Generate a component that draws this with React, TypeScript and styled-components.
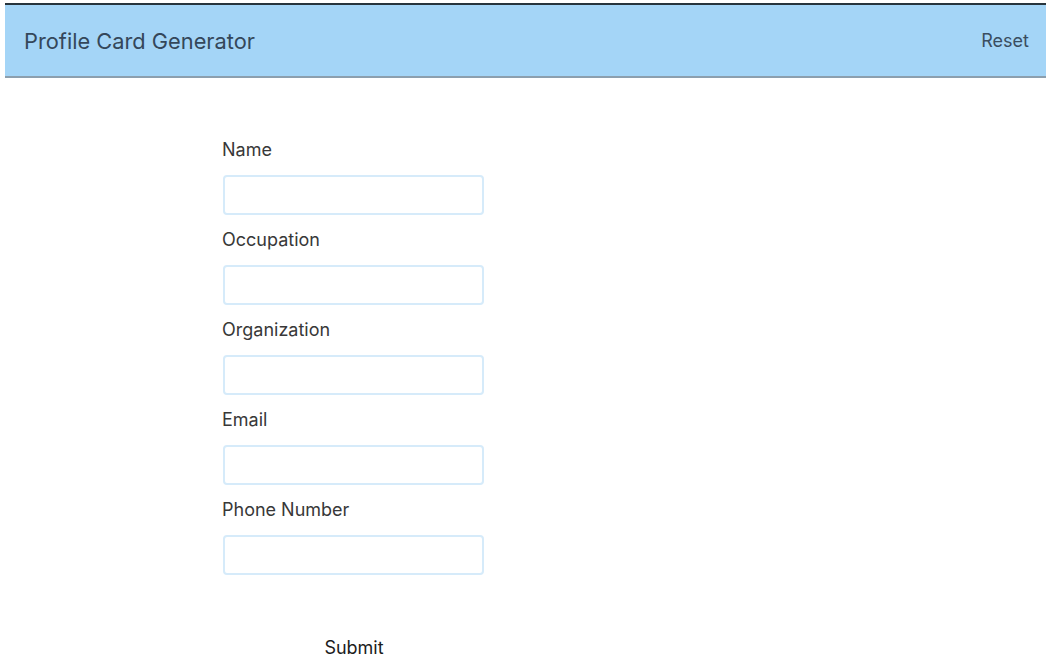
import styled, { createGlobalStyle } from 'styled-components';

/* ── Styles ── */

const Global = createGlobalStyle`
    html, body {
        margin: 0;
        padding: 0;
        background: #ffffff;
        font-family: Inter, "Liberation Sans", Arial, sans-serif;
    }
`;

const Header = styled.header`
    margin: 3px 5px 0;
    height: 71px;
    display: flex;
    align-items: center;
    justify-content: space-between;
    padding: 0 17px 0 19px;
    background: #a4d5f7;
    border-top: 2px solid #27343d;
    border-bottom: 2px solid #8c9fae;
`;

const Title = styled.h1`
    margin: 0;
    font-size: 21.8px;
    font-weight: 400;
    color: #34475a;
`;

const ResetButton = styled.button`
    background: none;
    border: none;
    padding: 0;
    font-family: inherit;
    font-size: 18px;
    color: #3a4d60;
    cursor: pointer;
`;

const Form = styled.form`
    width: 262px;
    margin: 62px 0 0 222px;
    display: flex;
    flex-direction: column;
`;

const Label = styled.label`
    display: block;
    font-size: 18px;
    line-height: 20px;
    color: #383838;
    margin-bottom: 15px;
`;

const Input = styled.input`
    display: block;
    box-sizing: border-box;
    width: 261px;
    height: 40px;
    margin: 0 0 15px 1px;
    border: 2px solid #d6ebfa;
    border-radius: 4px;
    background: #ffffff;
    outline: none;
    font-family: inherit;
    font-size: 16px;
    padding: 0 10px;
`;

const SubmitButton = styled.button`
    align-self: center;
    margin-top: 48px;
    margin-left: 2px;
    background: none;
    border: none;
    padding: 0;
    font-family: inherit;
    font-size: 18px;
    line-height: 20px;
    color: #1c1c1c;
    cursor: pointer;
`;

/* ── Component ── */

const fields = ['Name', 'Occupation', 'Organization', 'Email', 'Phone Number'];

export default function App() {
    return (
        <>
            <Global />
            <Header>
                <Title>Profile Card Generator</Title>
                <ResetButton type="button">Reset</ResetButton>
            </Header>
            <Form onSubmit={e => e.preventDefault()}>
                {fields.map(f => (
                    <div key={f}>
                        <Label htmlFor={f}>{f}</Label>
                        <Input id={f} type="text" />
                    </div>
                ))}
                <SubmitButton type="submit">Submit</SubmitButton>
            </Form>
        </>
    );
}
